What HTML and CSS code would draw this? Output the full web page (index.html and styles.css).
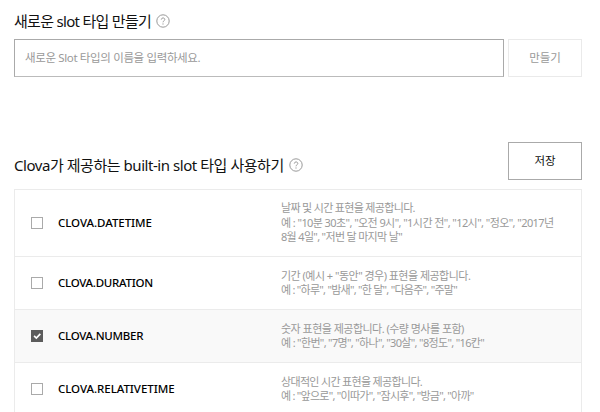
FILE: index.html
```html
<!DOCTYPE html>
<html lang="ko"><head><meta charset="utf-8"><title>Clova</title><link rel="stylesheet" href="styles.css"></head>
<body>
<section class="create">
<h2><span class="t1">새로운 slot 타입 만들기</span><svg class="help" viewBox="0 0 14 14"><circle cx="7" cy="7" r="6.2"/><path d="M5.3 5.6C5.3 3.4 8.8 3.4 8.8 5.5C8.8 6.8 7 6.8 7 8.3M7 9.4V10.6"/></svg></h2>
<div class="form"><div class="input"><span class="ph">새로운 Slot 타입의 이름을 입력하세요.</span></div><button class="btn off"><span>만들기</span></button></div>
</section>
<section class="builtin">
<div class="head"><h2><span class="t2">Clova가 제공하는 built-in slot 타입 사용하기</span><svg class="help" viewBox="0 0 14 14"><circle cx="7" cy="7" r="6.2"/><path d="M5.3 5.6C5.3 3.4 8.8 3.4 8.8 5.5C8.8 6.8 7 6.8 7 8.3M7 9.4V10.6"/></svg></h2><button class="btn"><span>저장</span></button></div>
<div class="list">
<div class="row tall"><i class="box"></i><b class="wide">CLOVA.DATETIME</b><p><span class="k3">날짜 및 시간 표현을 제공합니다.</span><span class="k2">예 : "10분 30초", "오전 9시", "1시간 전", "12시", "정오", "2017년</span><span class="k3">8월 4일", "저번 달 마지막 날"</span></p></div>
<div class="row"><i class="box"></i><b>CLOVA.DURATION</b><p><span class="k1">기간 (예시 + "동안" 경우) 표현을 제공합니다.</span><span class="k4">예 : "하루", "밤새", "한 달", "다음주", "주말"</span></p></div>
<div class="row sel"><i class="box"><svg viewBox="0 0 12 12"><path d="M2.5 5.8L5.2 8.5L10 3.5"/></svg></i><b>CLOVA.NUMBER</b><p><span class="k1">숫자 표현을 제공합니다. (수량 명사를 포함)</span><span class="k3">예 : "한번", "7명", "하나", "30살", "8정도", "16칸"</span></p></div>
<div class="row"><i class="box"></i><b class="wide">CLOVA.RELATIVETIME</b><p><span class="k3">상대적인 시간 표현을 제공합니다.</span><span class="k4">예 : "앞으로", "이따가", "잠시후", "방금", "아까"</span></p></div>
</div>
</section>
</body></html>
```
FILE: styles.css
```css
*{box-sizing:border-box}
body{margin:0;height:412px;overflow:hidden;background:#fff;color:#111;font-family:"Noto Sans","Noto Sans CJK KR",sans-serif;padding:11px 18px 0 14px}
h2{margin:0;font-size:15px;font-weight:400;line-height:20px;height:20px;display:flex;align-items:center;gap:5px;white-space:nowrap}
.t1{letter-spacing:-.7px}
.t2{letter-spacing:-.45px}
.help{width:14px;height:14px;fill:none;stroke:#999;stroke-width:1}
.form{display:flex;gap:4px;margin-top:8px}
.input{width:490px;height:38px;border:1px solid #aaa;border-bottom-color:#bbb;display:flex;align-items:center;padding:0 0 3px 10px;font-size:11.5px;color:#999;letter-spacing:-.36px}
.btn{width:74px;height:38px;border:1px solid #aaa;background:#fff;font:400 11.5px "Noto Sans CJK KR",sans-serif;color:#111;padding:0 0 3px}
.off{border-color:#eaeaea;color:#999}
.head{display:flex;justify-content:space-between;margin-top:65px}
.head h2{margin-top:13px}
.list{border:1px solid #ebebeb;margin-top:9px}
.row{display:flex;align-items:center;height:53px;border-bottom:1px solid #ebebeb;padding-left:16px}
.tall{height:67px}
.sel{background:#f9f9f9}
.box{width:12px;height:12px;border:1px solid #aaa;background:#fff;margin:0 15px 1px 0}
.sel .box{background:#5c5c5c;border-color:#5c5c5c}
.box svg{display:block;width:10px;height:10px;fill:none;stroke:#fff;stroke-width:2}
b{font-size:11.5px;font-weight:500;width:223px;color:#000;letter-spacing:-.28px;padding-bottom:2px}
.wide{letter-spacing:-.05px}
p{margin:0;font-size:11px;line-height:14.5px;color:#999}
p span{display:block;white-space:nowrap}
.k1{letter-spacing:-.52px}
.k2{letter-spacing:-.58px}
.k3{letter-spacing:-.67px}
.k4{letter-spacing:-.74px}
```
